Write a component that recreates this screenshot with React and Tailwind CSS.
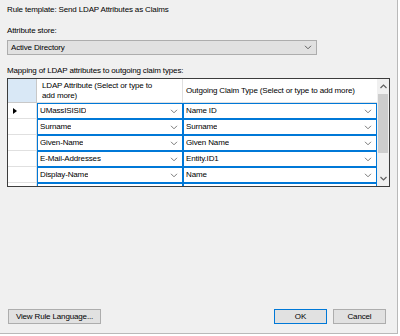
import React from 'react';

const rows = [
  ['UMassISISID', 'Name ID'],
  ['Surname', 'Surname'],
  ['Given-Name', 'Given Name'],
  ['E-Mail-Addresses', 'Entity.ID1'],
  ['Display-Name', 'Name'],
  ['', ''],
];

const Chevron = ({ color = '#7a7a7a' }) => (
  <svg width="8" height="5" viewBox="0 0 8 5" className="shrink-0">
    <path d="M1 0.8 L4 3.8 L7 0.8" fill="none" stroke={color} strokeWidth="1" />
  </svg>
);

const CellCombo = ({ value, width }) => (
  <div className={`${width} h-full bg-white border border-[#0078d7] flex items-center justify-between pl-[2px] pr-[4px]`}>
    <span className="truncate">{value}</span>
    <Chevron />
  </div>
);

const Button = ({ children, width, primary = false }) => (
  <div
    className={`${width} h-[15px] flex items-center justify-center bg-[#e1e1e1] border ${
      primary ? 'border-[#0078d7]' : 'border-[#adadad]'
    }`}
  >
    {children}
  </div>
);

export default function App() {
  return (
    <div className="w-[400px] h-[336px] bg-white">
      <div className="w-[398px] h-[334px] bg-[#f0f0f0] border-r border-b border-[#b9b9b9] font-['Liberation_Sans',Arial,sans-serif] text-[8px] text-black flex flex-col px-[7px] tracking-[-0.15px]">
        <div className="mt-[5px] h-[10px] leading-[10px]">Rule template: Send LDAP Attributes as Claims</div>
        <div className="mt-[11px] h-[10px] leading-[10px]">Attribute store:</div>

        <div className="mt-[4px] w-[310px] h-[15px] bg-[#e1e1e1] border border-[#adadad] flex items-center justify-between pl-[3px] pr-[4px]">
          <span>Active Directory</span>
          <Chevron color="#606060" />
        </div>

        <div className="mt-[11px] h-[10px] leading-[10px]">Mapping of LDAP attributes to outgoing claim types:</div>

        <div className="mt-[2px] w-[383px] h-[109px] border border-[#3c3c3c] bg-white flex overflow-hidden">
          <div className="flex flex-col flex-1 overflow-hidden">
            {/* header row */}
            <div className="h-[24px] flex shrink-0">
              <div className="w-[29px] h-full bg-[#d9e8f6] border-r border-b border-[#c8c8c8]" />
              <div className="w-[146px] h-full border-r border-b border-[#e0e0e0] flex flex-col justify-center pl-[5px] leading-[9.5px]">
                <span>LDAP Attribute (Select or type to</span>
                <span>add more)</span>
              </div>
              <div className="w-[194px] h-full border-b border-[#e0e0e0] flex items-center pl-[3px]">
                Outgoing Claim Type (Select or type to add more)
              </div>
            </div>
            {rows.map(([attr, claim], i) => (
              <div key={i} className="h-[16px] flex shrink-0">
                <div className="w-[29px] h-full border-r border-b border-[#e0e0e0] flex items-center pl-[5px]">
                  {i === 0 && (
                    <svg width="4" height="6" viewBox="0 0 4 6">
                      <path d="M0 0 L4 3 L0 6 Z" fill="#000" />
                    </svg>
                  )}
                </div>
                <CellCombo value={attr} width="w-[146px]" />
                <CellCombo value={claim} width="w-[194px]" />
              </div>
            ))}
          </div>

          {/* scrollbar */}
          <div className="w-[12px] h-full bg-[#f0f0f0] flex flex-col shrink-0">
            <div className="h-[15px] flex items-center justify-center">
              <svg width="7" height="5" viewBox="0 0 7 5">
                <path d="M0.5 4 L3.5 1 L6.5 4" fill="none" stroke="#606060" strokeWidth="1.2" />
              </svg>
            </div>
            <div className="mx-[1px] h-[59px] bg-[#cdcdcd]" />
            <div className="flex-1" />
            <div className="h-[15px] flex items-center justify-center">
              <svg width="7" height="5" viewBox="0 0 7 5">
                <path d="M0.5 1 L3.5 4 L6.5 1" fill="none" stroke="#606060" strokeWidth="1.2" />
              </svg>
            </div>
          </div>
        </div>

        <div className="flex-1" />

        <div className="flex items-center mb-[9px]">
          <div className="ml-[1px]">
            <Button width="w-[93px]">View Rule Language...</Button>
          </div>
          <div className="flex-1" />
          <Button width="w-[53px]" primary>OK</Button>
          <div className="w-[6px]" />
          <Button width="w-[53px]">Cancel</Button>
          <div className="w-[4px]" />
        </div>
      </div>
    </div>
  );
}
